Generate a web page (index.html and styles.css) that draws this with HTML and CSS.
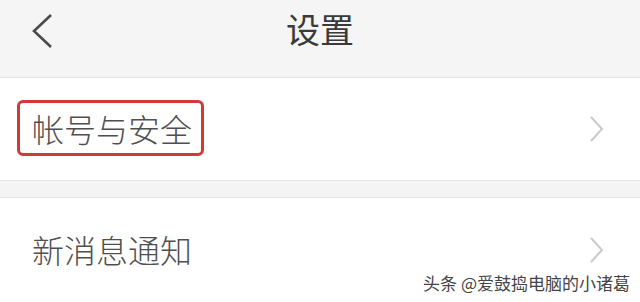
FILE: index.html
```html
<!DOCTYPE html>
<html lang="zh">
<head>
<meta charset="utf-8">
<link rel="stylesheet" href="styles.css">
</head>
<body>
<div class="page">
  <header class="header">
    <svg class="back" width="24" height="36" viewBox="0 0 24 36"><path d="M20 2 L3 18 L20 34" fill="none" stroke="#4a4a4a" stroke-width="2.6"/></svg>
    <h1 class="title">设置</h1>
  </header>
  <div class="row row-first">
    <span class="label boxed">帐号与安全</span>
    <svg class="arrow" width="16" height="26" viewBox="0 0 16 26"><path d="M2 1 L13 13 L2 25" fill="none" stroke="#cacaca" stroke-width="2"/></svg>
  </div>
  <div class="gap"></div>
  <div class="row row-second">
    <span class="label">新消息通知</span>
    <svg class="arrow" width="16" height="26" viewBox="0 0 16 26"><path d="M2 1 L13 13 L2 25" fill="none" stroke="#cacaca" stroke-width="2"/></svg>
  </div>
  <div class="watermark">头条 @爱鼓捣电脑的小诸葛</div>
</div>
</body>
</html>
```
FILE: styles.css
```css
* { box-sizing: border-box; }
html, body { margin: 0; padding: 0; background: #fff; }
body { font-family: "Noto Sans CJK SC", "Noto Sans", sans-serif; }
.page { position: relative; width: 640px; height: 302px; overflow: hidden; }
.header {
  position: relative;
  height: 78px;
  background: #f5f5f5;
  border-bottom: 1px solid #e3e3e3;
  display: flex;
  align-items: flex-start;
  justify-content: center;
  padding-top: 12px;
}
.back { position: absolute; left: 31px; top: 13px; }
.title {
  margin: 0;
  font-size: 34px;
  font-weight: 400;
  color: #3a3a3a;
  line-height: 34px;
}
.row {
  display: flex;
  align-items: flex-start;
  justify-content: space-between;
  padding: 0 35px 0 17px;
  background: #fff;
}
.row-first { height: 102px; padding-top: 22px; }
.row-first .arrow { margin-top: 16px; }
.row-second { height: 110px; padding-left: 32px; padding-top: 26px; }
.row-second .arrow { margin-top: 13px; }
.label {
  font-size: 32px;
  font-weight: 300;
  color: #4f4f4f;
  line-height: 50px;
}
.boxed {
  border: 3px solid #d23a3a;
  border-radius: 6px;
  padding: 0 9px 0 12px;
}
.gap {
  height: 18px;
  background: #f4f4f4;
  border-top: 1px solid #e6e6e6;
  border-bottom: 1px solid #e6e6e6;
}
.watermark {
  position: absolute;
  right: 10px;
  bottom: 9px;
  font-size: 17px;
  line-height: 20px;
  color: #444;
  text-shadow: 0 0 2px #fff, 0 0 2px #fff;
}
```
